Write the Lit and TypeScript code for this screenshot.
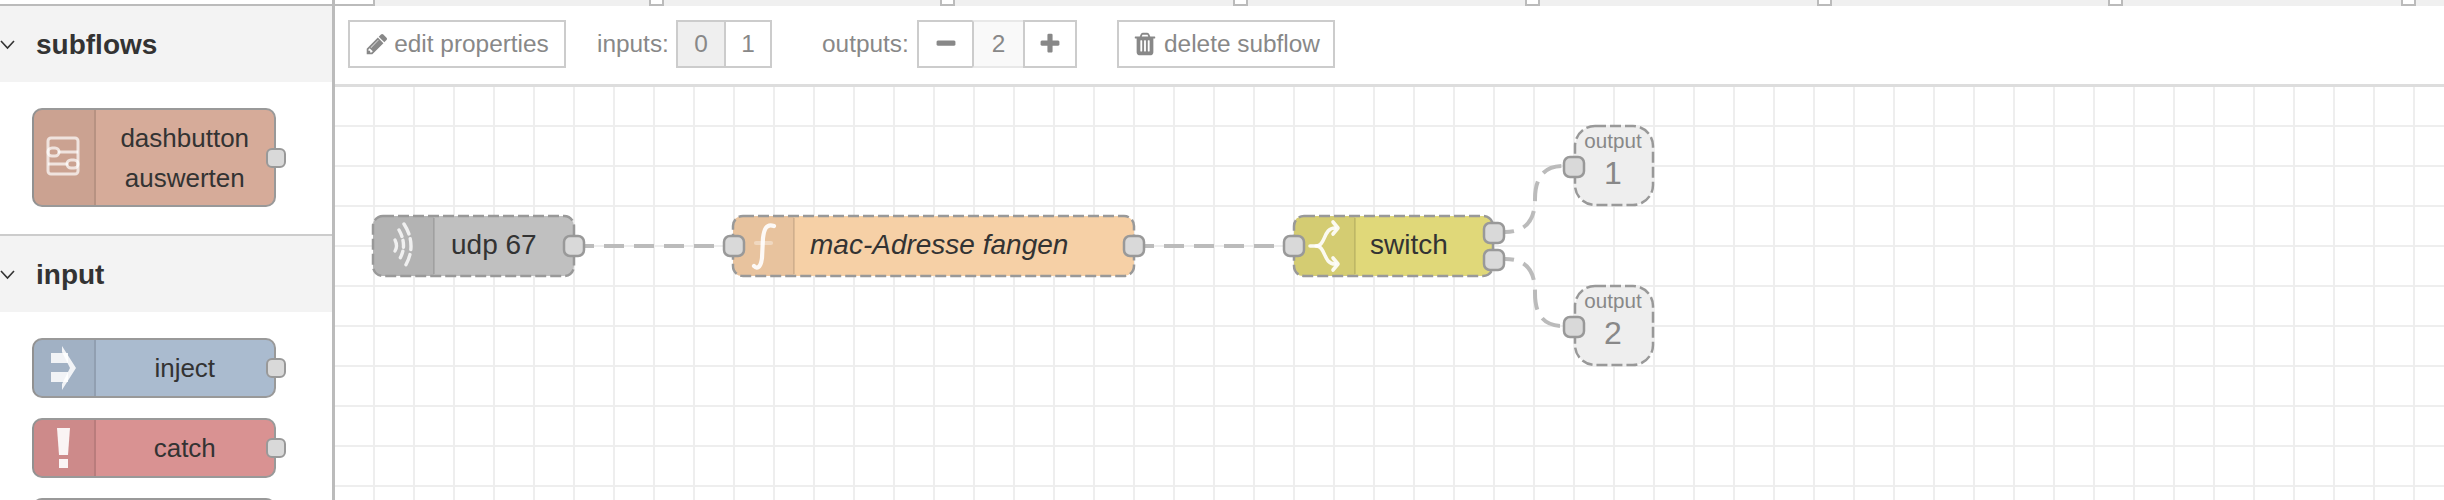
import {customElement} from "lit/decorators.js";
import {css, html, svg, LitElement} from "lit";

const FA_PENCIL = "M491 1536l91-91-235-235-91 91v107h128v128h107zm523-928q0-22-22-22-10 0-17 7l-542 542q-7 7-7 17 0 22 22 22 10 0 17-7l542-542q7-7 7-17zm-54-192l416 416-832 832h-416v-416zm683 96q0 53-37 90l-166 166-416-416 166-165q36-38 90-38 53 0 91 38l235 234q37 39 37 91z";
const FA_TRASH = "M704 1376v-704q0-14-9-23t-23-9h-64q-14 0-23 9t-9 23v704q0 14 9 23t23 9h64q14 0 23-9t9-23zm256 0v-704q0-14-9-23t-23-9h-64q-14 0-23 9t-9 23v704q0 14 9 23t23 9h64q14 0 23-9t9-23zm256 0v-704q0-14-9-23t-23-9h-64q-14 0-23 9t-9 23v704q0 14 9 23t23 9h64q14 0 23-9t9-23zm-544-992h448l-48-117q-7-9-17-11h-317q-10 2-17 11zm928 32v64q0 14-9 23t-23 9h-96v948q0 83-47 143.5t-113 60.5h-832q-66 0-113-58.5t-47-141.5v-952h-96q-14 0-23-9t-9-23v-64q0-14 9-23t23-9h309l70-167q15-37 54-63t79-26h320q40 0 79 26t54 63l70 167h309q14 0 23 9t9 23z";
const FA_MINUS = "M1600 736v192q0 40-28 68t-68 28h-1216q-40 0-68-28t-28-68v-192q0-40 28-68t68-28h1216q40 0 68 28t28 68z";
const FA_PLUS = "M1600 736v192q0 40-28 68t-68 28h-416v416q0 40-28 68t-68 28h-192q-40 0-68-28t-28-68v-416h-416q-40 0-68-28t-28-68v-192q0-40 28-68t68-28h416v-416q0-40 28-68t68-28h192q40 0 68 28t28 68v416h416q40 0 68 28t28 68z";

// gaps between the little tab notches along the top strip
const TAB_GAPS = [274, 276, 278, 277, 277, 276, 278];

const faIcon = (d: string, size: number) => html`
    <svg class="fa" width="${size}" height="${size}" viewBox="0 0 1792 1792"><path d="${d}"></path></svg>
`;

const subflowIcon = html`
    <svg width="64" height="99" viewBox="0 0 64 99" fill="none" stroke="#fff" stroke-opacity="0.7" stroke-width="3">
        <rect x="16" y="30" width="30" height="36" rx="3"></rect>
        <path d="M26 44H46M16 56H36"></path>
        <rect x="16" y="40" width="11" height="8" rx="4"></rect>
        <rect x="35" y="52" width="11" height="8" rx="4"></rect>
    </svg>
`;

const injectIcon = html`
    <svg width="64" height="60" viewBox="0 0 64 60" fill="#fff" fill-opacity="0.85">
        <path d="M19 15H36V25H19ZM19 34H36V44H19Z"></path>
        <path d="M30 8L44 30L30 52L30 46L38 30L30 14Z"></path>
    </svg>
`;

const catchIcon = html`
    <svg width="64" height="60" viewBox="0 0 64 60" fill="#fff" fill-opacity="0.9">
        <path d="M25 10H38L36 37H27Z"></path>
        <rect x="27" y="41" width="9" height="9"></rect>
    </svg>
`;

const udpIcon = svg`
    <g fill="none" stroke="#fff" stroke-opacity="0.8" stroke-width="3.4" stroke-linecap="round">
        <path d="M404 224Q418 246 404 268" stroke-dasharray="11 5"></path>
        <path d="M399 230Q408 246 399 260" stroke-dasharray="7 4"></path>
        <path d="M395 240Q398 246 395 251"></path>
    </g>
`;

const functionIcon = svg`
    <g fill="none" stroke="#fff" stroke-opacity="0.9" stroke-width="4.2" stroke-linecap="round">
        <path d="M774 226C766 223 764 230 763 238L762 258C761 266 758 270 754 266"></path>
        <path d="M756 243H771" stroke-opacity="0.35"></path>
    </g>
`;

const switchIcon = svg`
    <g fill="none" stroke="#fff" stroke-opacity="0.9" stroke-width="3.6" stroke-linecap="round" stroke-linejoin="round">
        <path d="M1310 246H1316C1326 246 1323 228 1335 228"></path>
        <path d="M1316 246C1326 246 1323 264 1335 264"></path>
        <path d="M1333 222L1338 228L1333 234"></path>
        <path d="M1333 258L1338 264L1333 270"></path>
    </g>
`;

const port = (x: number, y: number) => svg`
    <rect class="port" x="${x}" y="${y}" width="20" height="20" rx="6"></rect>
`;

const flowNode = (x: number, w: number, fill: string, stripe: string, icon: unknown, label: string, textX: number, italic = false) => {
    const y = 216, h = 60, end = x + 61, r = 10;
    return svg`
        <rect x="${x}" y="${y}" width="${w}" height="${h}" rx="${r}" fill="${fill}"></rect>
        <path d="M${x + r} ${y}H${end}V${y + h}H${x + r}Q${x} ${y + h} ${x} ${y + h - r}V${y + r}Q${x} ${y} ${x + r} ${y}Z" fill="${stripe}"></path>
        <path d="M${end} ${y + 2}V${y + h - 2}" stroke="#000" stroke-opacity="0.1" stroke-width="2"></path>
        ${icon}
        <rect class="edge" x="${x}" y="${y}" width="${w}" height="${h}" rx="${r}"></rect>
        <text class="${italic ? "label italic" : "label"}" x="${textX}" y="254">${label}</text>
    `;
};

const outputBox = (y: number, n: string) => svg`
    <rect class="edge" x="1575" y="${y}" width="78" height="79" rx="20" fill="#eee"></rect>
    <text class="out-label" x="1613" y="${y + 22}">output</text>
    <text class="out-num" x="1613" y="${y + 58}">${n}</text>
    ${port(1564, y + 31)}
`;

@customElement("app-root")
class AppRoot extends LitElement {
    static styles = [css`
        :host {
            display: block;
            width: 2444px;
            height: 500px;
            overflow: hidden;
            background: #fff;
            font-family: "Liberation Sans", Arial, sans-serif;
            color: #333;
        }
        .app {
            display: flex;
            height: 500px;
        }

        .sidebar {
            width: 335px;
            height: 500px;
            box-sizing: border-box;
            flex: none;
            padding-top: 4px;
            border-right: 3px solid #bbb;
            overflow: hidden;
        }
        .header {
            height: 74px;
            padding-top: 2px;
            display: flex;
            align-items: center;
            gap: 21px;
            background: #f3f3f3;
            border-top: 2px solid #bbb;
            font-size: 28px;
            font-weight: bold;
        }
        .header svg {
            flex: none;
        }
        .section + .section .header {
            border-top-color: #ccc;
        }
        .nodes {
            display: flex;
            flex-direction: column;
            gap: 20px;
            padding: 26px 0 0 32px;
        }
        .section:first-child .nodes {
            height: 126px;
        }
        .node {
            position: relative;
            box-sizing: border-box;
            width: 244px;
            height: 60px;
            display: flex;
            flex: none;
            border: 2.5px solid #999;
            border-radius: 10px;
            font-size: 26px;
            line-height: 40px;
        }
        .node.tall {
            height: 99px;
        }
        .stripe {
            flex: none;
            width: 62px;
            border-radius: 8px 0 0 8px;
            border-right: 2px solid rgba(0, 0, 0, 0.1);
            background: rgba(0, 0, 0, 0.05);
            margin-left: -2.5px;
        }
        .stripe svg {
            display: block;
            margin-top: -2.5px;
        }
        .node-label {
            flex: 1;
            display: flex;
            flex-direction: column;
            align-items: center;
            justify-content: center;
        }
        .node-port {
            position: absolute;
            right: -12px;
            top: 50%;
            width: 20px;
            height: 20px;
            box-sizing: border-box;
            transform: translateY(-50%);
            background: #d9d9d9;
            border: 2.5px solid #999;
            border-radius: 6px;
        }
        .subflow { background: #d6ab99; }
        .inject { background: #aabbcf; }
        .catch { background: #d99292; }

        .main {
            flex: 1;
            display: flex;
            flex-direction: column;
            min-width: 0;
        }
        .tabs {
            height: 6px;
            flex: none;
            display: flex;
            background: #f0f0f0;
        }
        .tab-first {
            width: 40px;
            box-sizing: border-box;
            background: #fff;
            border-right: 2px solid #bbb;
            border-bottom: 2px solid #bbb;
        }
        .notch {
            width: 15px;
            box-sizing: border-box;
            background: #fff;
            border: 2px solid #bbb;
            border-top: none;
        }

        .toolbar {
            height: 78px;
            flex: none;
            box-sizing: border-box;
            display: flex;
            align-items: flex-start;
            padding: 14px 0 0 13px;
            font-size: 24.4px;
            color: #888;
        }
        .btn, .group {
            height: 48px;
            box-sizing: border-box;
            border: 2px solid #ccc;
            background: #fff;
        }
        .btn {
            display: flex;
            align-items: center;
            justify-content: center;
            gap: 6px;
        }
        .btn.edit { width: 218px; gap: 5px; }
        .btn.delete { width: 218px; margin-left: 40px; }
        .tb-label {
            line-height: 48px;
            white-space: nowrap;
        }
        .tb-label.inputs { width: 70px; margin: 0 9px 0 31px; }
        .tb-label.outputs { width: 88px; margin: 0 7px 0 50px; }
        .group {
            display: flex;
        }
        .cell {
            display: flex;
            align-items: center;
            justify-content: center;
            box-sizing: border-box;
        }
        .cell + .cell {
            border-left: 2px solid #ccc;
        }
        .cell.off { background: #efefef; }
        .cell.value {
            background: #f9f9f9;
            margin: -2px 0;
            border-top: 2px solid #e8e8e8;
            border-bottom: 2px solid #e8e8e8;
        }
        .fa {
            fill: #888;
            flex: none;
            display: block;
        }

        .canvas {
            flex: 1;
            border-top: 3px solid #ddd;
            background-color: #fff;
            background-image:
                linear-gradient(to right, transparent 38px, #eee 38px, #eee 40px),
                linear-gradient(to bottom, transparent 38px, #eee 38px, #eee 40px);
            background-size: 40px 40px;
        }
        .canvas svg {
            display: block;
        }
        .wire {
            fill: none;
            stroke: #bbb;
            stroke-width: 4;
            stroke-dasharray: 20 10;
        }
        .edge {
            fill: none;
            stroke: #999;
            stroke-width: 2.5;
            stroke-dasharray: 11 4;
        }
        rect.edge[fill] {
            fill: #eee;
        }
        .port {
            fill: #d9d9d9;
            stroke: #999;
            stroke-width: 2.5;
        }
        .label {
            font-size: 28px;
            fill: #333;
        }
        .italic {
            font-style: italic;
        }
        .out-label {
            font-size: 20.6px;
            fill: #888;
            text-anchor: middle;
        }
        .out-num {
            font-size: 32px;
            fill: #888;
            text-anchor: middle;
        }
    `];

    private renderHeader(title: string) {
        return html`
            <div class="header">
                <svg width="15" height="12" viewBox="0 0 15 12"><path d="M1 2L7.5 9L14 2" fill="none" stroke="#333" stroke-width="1.6"></path></svg>
                ${title}
            </div>
        `;
    }

    private renderNode(cls: string, icon: unknown, lines: string[]) {
        return html`
            <div class="node ${cls}">
                <div class="stripe">${icon}</div>
                <div class="node-label">${lines.map((l) => html`<span>${l}</span>`)}</div>
                <div class="node-port"></div>
            </div>
        `;
    }

    protected render(): unknown {
        return html`
            <div class="app">
                <div class="sidebar">
                    <div class="section">
                        ${this.renderHeader("subflows")}
                        <div class="nodes">
                            ${this.renderNode("tall subflow", subflowIcon, ["dashbutton", "auswerten"])}
                        </div>
                    </div>
                    <div class="section">
                        ${this.renderHeader("input")}
                        <div class="nodes">
                            ${this.renderNode("inject", injectIcon, ["inject"])}
                            ${this.renderNode("catch", catchIcon, ["catch"])}
                            ${this.renderNode("", "", [""])}
                        </div>
                    </div>
                </div>
                <div class="main">
                    <div class="tabs">
                        <div class="tab-first"></div>
                        ${TAB_GAPS.map((gap) => html`<div class="notch" style="margin-left:${gap}px"></div>`)}
                    </div>
                    <div class="toolbar">
                        <div class="btn edit">${faIcon(FA_PENCIL, 24)}<span>edit properties</span></div>
                        <span class="tb-label inputs">inputs:</span>
                        <div class="group">
                            <div class="cell off" style="width:46px">0</div>
                            <div class="cell" style="width:46px">1</div>
                        </div>
                        <span class="tb-label outputs">outputs:</span>
                        <div class="group">
                            <div class="cell" style="width:53px">${faIcon(FA_MINUS, 24)}</div>
                            <div class="cell value" style="width:51px">2</div>
                            <div class="cell" style="width:52px">${faIcon(FA_PLUS, 24)}</div>
                        </div>
                        <div class="btn delete">${faIcon(FA_TRASH, 26)}<span>delete subflow</span></div>
                    </div>
                    <div class="canvas">
                        <svg width="2109" height="413" viewBox="335 87 2109 413">
                            <path class="wire" d="M574 246H733"></path>
                            <path class="wire" d="M1134 246H1294"></path>
                            <path class="wire" d="M1494 232H1505C1530 232 1535 215 1535 199C1535 183 1540 166 1563 166H1574"></path>
                            <path class="wire" d="M1494 259H1505C1530 259 1535 275 1535 293C1535 310 1540 326 1563 326H1574"></path>

                            ${flowNode(373, 201, "#c0c0c0", "#b3b3b3", udpIcon, "udp 67", 451)}
                            ${port(564, 236)}

                            ${flowNode(733, 401, "#f6d0a6", "#e8c39e", functionIcon, "mac-Adresse fangen", 810, true)}
                            ${port(724, 236)}
                            ${port(1124, 236)}

                            ${flowNode(1294, 199, "#e0d879", "#d4cc72", switchIcon, "switch", 1370)}
                            ${port(1284, 236)}
                            ${port(1484, 223)}
                            ${port(1484, 250)}

                            ${outputBox(126, "1")}
                            ${outputBox(286, "2")}
                        </svg>
                    </div>
                </div>
            </div>
        `;
    }
}
